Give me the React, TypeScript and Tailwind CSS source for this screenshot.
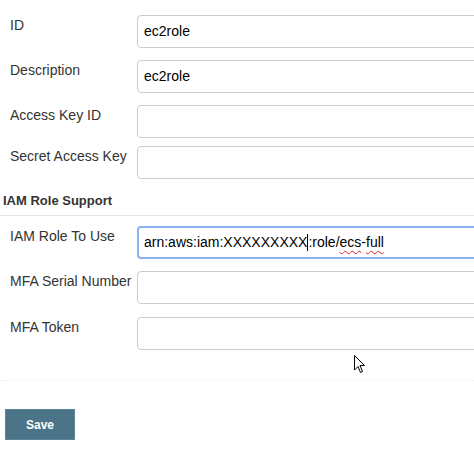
import React from "react";

const font = { fontFamily: '"Liberation Sans", Arial, sans-serif' };

function Field({ label, value, top }: { label: string; value?: string; top: string }) {
  return (
    <div className={`flex items-start ${top}`}>
      <label className="w-[137px] shrink-0 pl-[10px] text-[14px] leading-5 text-[#333]">{label}</label>
      <div className="h-[33px] w-[360px] shrink-0 rounded-[4px] border border-[#cccccc] bg-white px-[6px] text-[14px] leading-[31px] text-black">
        {value}
      </div>
    </div>
  );
}

export default function App() {
  return (
    <div className="relative h-[454px] w-[474px] overflow-hidden bg-white" style={font}>
      <div className="flex flex-col">
        <Field label="ID" value="ec2role" top="mt-[15px]" />
        <Field label="Description" value="ec2role" top="mt-[12px]" />
        <Field label="Access Key ID" top="mt-[12px]" />
        <Field label="Secret Access Key" top="mt-[8px]" />

        <h3 className="mt-[12px] pl-[3px] text-[13px] font-bold leading-5 text-[#333]">IAM Role Support</h3>
        <div className="mt-[4px] border-t border-[#e5e5e5]" />

        <div className="mt-[10px] flex items-start">
          <label className="w-[137px] shrink-0 pl-[10px] text-[14px] leading-5 text-[#333]">IAM Role To Use</label>
          <div className="flex h-[33px] w-[360px] shrink-0 items-center rounded-[4px] border-2 border-[#8ab2ef] bg-white px-[5px] text-[14px] text-black">
            <span>arn:aws:iam:XXXXXXXXX</span>
            <span className="h-[17px] w-px bg-black" />
            <span>:role/</span>
            <span className="underline decoration-[#e02020] decoration-wavy decoration-1 underline-offset-[3px]">ecs</span>
            <span>-</span>
            <span className="underline decoration-[#e02020] decoration-wavy decoration-1 underline-offset-[3px]">full</span>
          </div>
        </div>
        <Field label="MFA Serial Number" top="mt-[12px]" />
        <Field label="MFA Token" top="mt-[13px]" />

        <div className="mt-[30px] border-t border-dotted border-[#f0f0f0]" />

        <div className="mt-[28px] pl-[5px]">
          <button className="h-[31px] w-[70px] border border-[#5a8497] bg-[#4b7489] text-[12px] font-bold text-white">
            Save
          </button>
        </div>
      </div>

      {/* mouse pointer */}
      <svg className="absolute left-[354px] top-[355px]" width="12" height="19" viewBox="0 0 12 19">
        <path d="M0.5 0.5 L0.5 15 L4 11.5 L6.5 17.5 L8.5 16.5 L6 10.5 L10.5 10.5 Z" fill="white" stroke="black" strokeWidth="1" />
      </svg>
    </div>
  );
}
